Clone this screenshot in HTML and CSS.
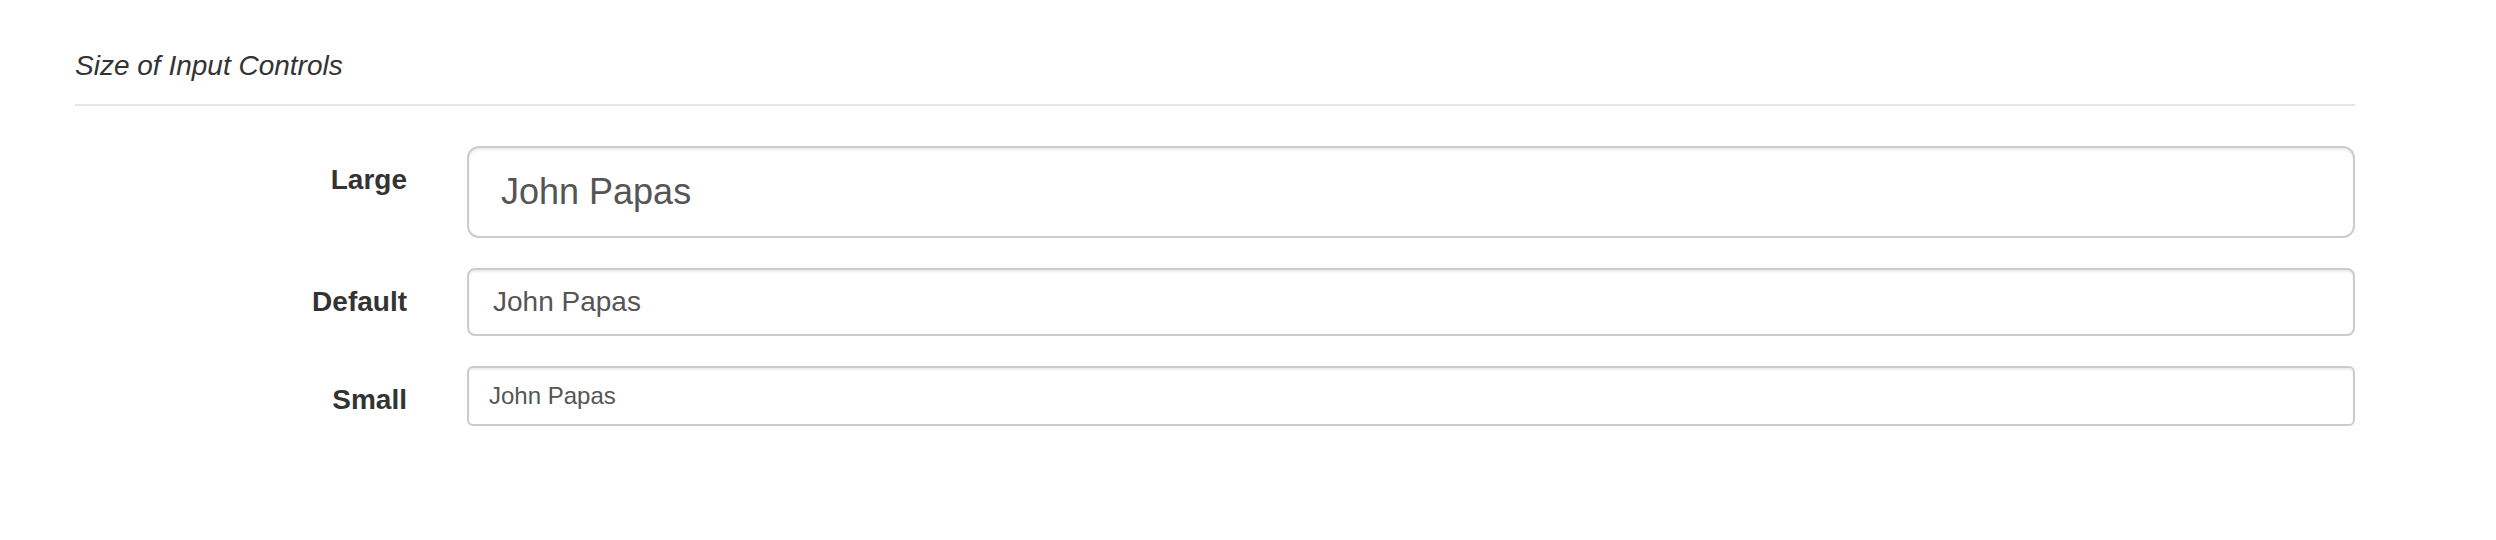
FILE: index.html
```html
<!DOCTYPE html>
<html lang="en">
<head>
<meta charset="utf-8">
<title>Size of Input Controls</title>
<link rel="stylesheet" href="styles.css">
</head>
<body>
<div class="page">
  <form class="panel">
    <div class="legend">Size of Input Controls</div>
    <div class="form-group">
      <label class="control-label" for="in-lg">Large</label>
      <div class="field"><input id="in-lg" class="form-control input-lg" type="text" value="John Papas"></div>
    </div>
    <div class="form-group">
      <label class="control-label" for="in-md">Default</label>
      <div class="field"><input id="in-md" class="form-control" type="text" value="John Papas"></div>
    </div>
    <div class="form-group">
      <label class="control-label" for="in-sm">Small</label>
      <div class="field"><input id="in-sm" class="form-control input-sm" type="text" value="John Papas"></div>
    </div>
  </form>
</div>
</body>
</html>
```
FILE: styles.css
```css
html, body {
  margin: 0;
  padding: 0;
  background: #fff;
}
body {
  font-family: "Liberation Sans", Arial, Helvetica, sans-serif;
  font-size: 28px;
  line-height: 40px;
  color: #333;
}
.page {
  padding: 46px 0 0 75px;
}
.panel {
  width: 2280px;
  margin: 0;
}
.legend {
  font-size: 28px;
  font-style: italic;
  line-height: 40px;
  color: #333;
  padding-bottom: 18px;
  border-bottom: 2px solid #e5e5e5;
  margin-bottom: 40px;
}
.form-group {
  display: flex;
  margin: 0 -30px 30px;
}
.control-label {
  box-sizing: border-box;
  width: 390px;
  flex: none;
  padding: 14px 28px 0 30px;
  text-align: right;
  font-weight: bold;
  font-size: 28px;
  line-height: 40px;
  color: #333;
}
.field {
  flex: 1;
  padding: 0 30px 0 32px;
}
.form-control {
  display: block;
  box-sizing: border-box;
  width: 100%;
  margin: 0;
  height: 68px;
  padding: 12px 24px;
  font-family: "Liberation Sans", Arial, Helvetica, sans-serif;
  font-size: 28px;
  line-height: 40px;
  color: #555;
  background: #fff;
  border: 2px solid #ccc;
  border-radius: 8px;
  box-shadow: inset 0 2px 2px rgba(0, 0, 0, 0.075);
  outline: none;
}
.input-lg {
  height: 92px;
  padding: 20px 32px;
  font-size: 36px;
  line-height: 48px;
  border-radius: 12px;
}
.input-sm {
  height: 60px;
  padding: 10px 20px;
  font-size: 24px;
  line-height: 36px;
  border-radius: 6px;
}
```
